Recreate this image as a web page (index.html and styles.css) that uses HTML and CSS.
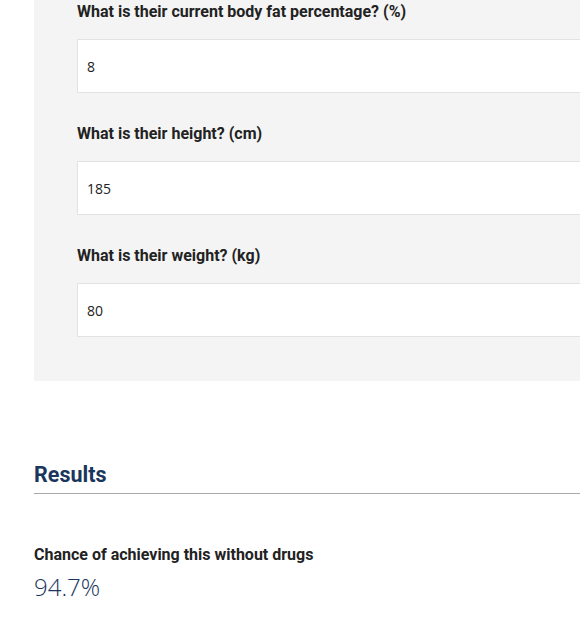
FILE: index.html
```html
<!DOCTYPE html>
<html>
<head>
<meta charset="utf-8">
<link rel="stylesheet" href="styles.css">
</head>
<body>
<div class="page">
  <div class="panel">
    <div class="field">
      <label class="label">What is their current body fat percentage? (%)</label>
      <div class="input">8</div>
    </div>
    <div class="field">
      <label class="label">What is their height? (cm)</label>
      <div class="input">185</div>
    </div>
    <div class="field">
      <label class="label">What is their weight? (kg)</label>
      <div class="input">80</div>
    </div>
  </div>
  <section class="results">
    <h2 class="results-title">Results</h2>
    <div class="result">
      <div class="result-label">Chance of achieving this without drugs</div>
      <div class="result-value">94.7%</div>
    </div>
  </section>
</div>
</body>
</html>
```

FILE: styles.css
```css
html, body {
  margin: 0;
  padding: 0;
  background: #ffffff;
  overflow: hidden;
}
.page {
  width: 900px;
  padding-left: 34px;
}
.panel {
  background: #f4f4f4;
  margin-top: -30px;
  padding: 30px 0 44px 43px;
  display: flex;
  flex-direction: column;
  gap: 29px;
}
.field {
  display: flex;
  flex-direction: column;
}
.label {
  font-family: Roboto, "Liberation Sans", sans-serif;
  font-weight: 700;
  font-size: 16px;
  line-height: 24px;
  color: #222222;
  margin-bottom: 15px;
}
.input {
  background: #ffffff;
  border: 1px solid #e2e2e2;
  height: 52px;
  box-sizing: content-box;
  padding-left: 9px;
  display: flex;
  align-items: center;
  font-family: "Open Sans", sans-serif;
  font-size: 14px;
  color: #222222;
}
.results {
  padding-top: 80px;
}
.results-title {
  margin: 0;
  font-family: Roboto, "Liberation Sans", sans-serif;
  font-weight: 700;
  font-size: 21.5px;
  line-height: 28px;
  color: #1b365d;
  padding-bottom: 4px;
  border-bottom: 1px solid #aaaaaa;
}
.result {
  padding-top: 50px;
}
.result-label {
  font-family: Roboto, "Liberation Sans", sans-serif;
  font-weight: 700;
  font-size: 16px;
  line-height: 22px;
  color: #222222;
}
.result-value {
  font-family: "Open Sans", sans-serif;
  font-weight: 300;
  font-size: 24px;
  line-height: 32px;
  color: #1b365d;
  margin-top: 5px;
}
```
